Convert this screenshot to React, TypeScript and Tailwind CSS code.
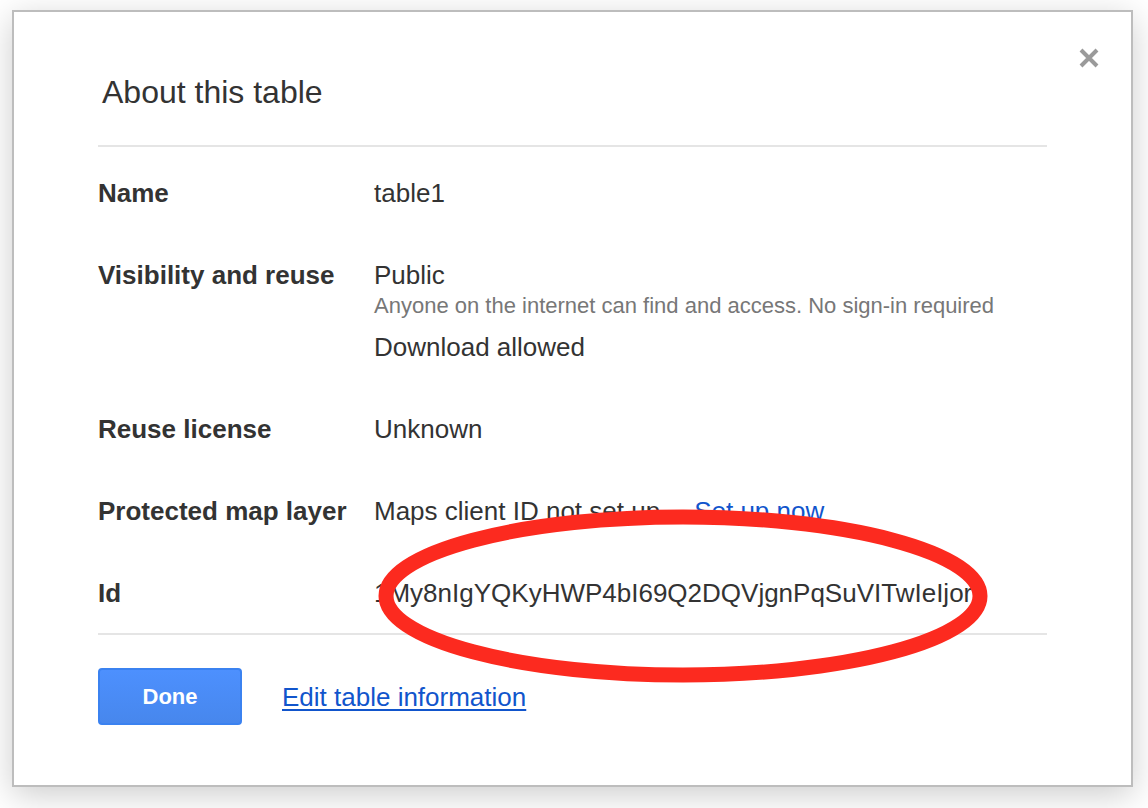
import React from 'react';

const rows: { label: string; value: React.ReactNode }[] = [
  { label: 'Name', value: <div className="leading-[30px]">table1</div> },
  {
    label: 'Visibility and reuse',
    value: (
      <div>
        <div className="leading-[30px]">Public</div>
        <div className="mt-[3px] text-[22px] leading-[26px] text-[#777]">
          Anyone on the internet can find and access. No sign-in required
        </div>
        <div className="mt-[13px] leading-[30px]">Download allowed</div>
      </div>
    ),
  },
  { label: 'Reuse license', value: <div className="leading-[30px]">Unknown</div> },
  {
    label: 'Protected map layer',
    value: (
      <div className="flex leading-[30px]">
        <span>Maps client ID not set up</span>
        <a className="ml-[34px] text-[#1155cc] cursor-pointer">Set up now</a>
      </div>
    ),
  },
  {
    label: 'Id',
    value: (
      <div className="w-[600px] overflow-hidden whitespace-nowrap leading-[30px]">
        1My8nIgYQKyHWP4bI69Q2DQVjgnPqSuVITwIeIjor
      </div>
    ),
  },
];

const App: React.FC = () => {
  return (
    <div className="relative w-[1148px] h-[808px] bg-white overflow-hidden font-['Liberation_Sans',Arial,sans-serif] text-[#333]">
      {/* dialog */}
      <div className="relative ml-[12px] mt-[10px] w-[1121px] h-[777px] bg-white border-2 border-[#bdbdbd] shadow-[0_8px_32px_rgba(0,0,0,0.2)] pt-[60px] px-[84px]">
        <button className="absolute right-[31px] top-[35px] w-[22px] h-[22px] cursor-pointer">
          <svg width="22" height="22" viewBox="0 0 22 22">
            <path d="M3 3 L19 19 M19 3 L3 19" stroke="#9a9a9a" strokeWidth="4" strokeLinecap="butt" />
          </svg>
        </button>

        <h1 className="pl-[4px] text-[32px] leading-[40px] font-normal text-[#333]">About this table</h1>
        <div className="mt-[33px] h-[2px] bg-[#e5e5e5]" />

        <div className="mt-[5px]">
          {rows.map((r) => (
            <div key={r.label} className="flex py-[26px] text-[26px]">
              <div className="w-[276px] shrink-0 font-bold leading-[30px]">{r.label}</div>
              <div className="flex-1">{r.value}</div>
            </div>
          ))}
        </div>
        <div className="-mt-[1px] h-[2px] bg-[#e5e5e5]" />

        <div className="mt-[33px] flex items-center">
          <button className="w-[144px] h-[57px] rounded-[4px] border-2 border-[#3b82f0] bg-gradient-to-b from-[#4d90fe] to-[#4787ed] text-white text-[22px] font-bold">
            Done
          </button>
          <a className="ml-[40px] text-[26px] leading-[30px] text-[#1155cc] underline underline-offset-[3px] cursor-pointer">
            Edit table information
          </a>
        </div>
      </div>

      {/* red annotation */}
      <svg className="absolute left-0 top-0 pointer-events-none" width="1148" height="808" viewBox="0 0 1148 808">
        <ellipse cx="683" cy="596" rx="297" ry="79" fill="none" stroke="#fc2a1f" strokeWidth="15" />
      </svg>
    </div>
  );
};

export default App;
